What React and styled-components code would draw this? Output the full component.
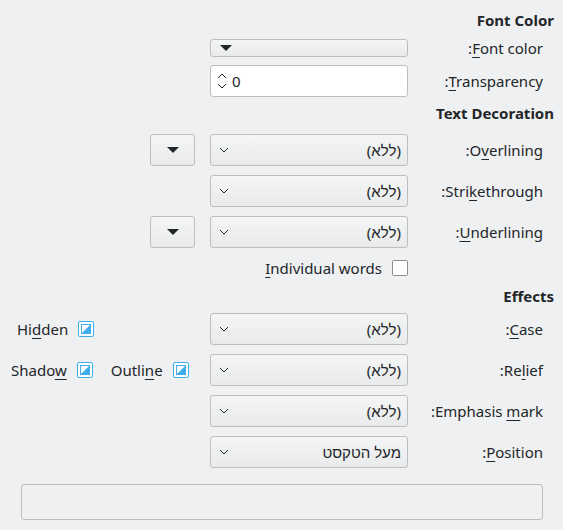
import React from "react";
import styled, { createGlobalStyle } from "styled-components";

const Global = createGlobalStyle`
  body { margin:0; background:#eff0f1; font-family:"Noto Sans",sans-serif; font-size:15px; color:#232629; }
`;
const Page = styled.div`width:563px;height:530px;box-sizing:border-box;padding:9px 20px 0 21px;display:flex;flex-direction:column;`;
const Heading = styled.div`font-weight:bold;text-align:right;margin-right:-11px;height:${p=>p.h||22}px;line-height:${p=>p.h||22}px;`;
const Row = styled.div`display:grid;grid-template-columns:174px 198px 1fr;column-gap:15px;align-items:center;height:${p=>p.h||41}px;`;
const Left = styled.div`display:flex;justify-content:${p=>p.start?"flex-start":"flex-end"};align-items:center;gap:18px;margin-left:${p=>p.ml||0}px;`;
const Label = styled.div`text-align:right;`;
const U = styled.span`text-decoration:underline;text-underline-offset:3px;`;
const Combo = styled.div`height:32px;box-sizing:border-box;border:1px solid #bcbebf;border-radius:3px;background:linear-gradient(#f4f5f5,#e9eaeb);display:flex;align-items:center;justify-content:space-between;padding:0 6px 0 8px;`;
const Spin = styled.div`height:32px;box-sizing:border-box;border:1px solid #bcbebf;border-radius:3px;background:#fff;display:flex;align-items:center;gap:4px;padding:0 5px;`;
const ColorBtn = styled.div`height:18px;box-sizing:border-box;border:1px solid #bcbebf;border-radius:3px;background:linear-gradient(#f4f5f5,#e9eaeb);display:flex;align-items:center;padding-left:9px;`;
const Tri = styled.span`width:0;height:0;border-left:6px solid transparent;border-right:6px solid transparent;border-top:6px solid #232629;`;
const SmallBtn = styled.div`width:45px;height:32px;box-sizing:border-box;border:1px solid #bcbebf;border-radius:3px;background:linear-gradient(#f4f5f5,#e9eaeb);display:flex;align-items:center;justify-content:center;`;
const Check = styled.span`width:16px;height:16px;box-sizing:border-box;border:1px solid ${p=>p.on?"#3daee9":"#8a8d90"};border-radius:2px;background:#fff;display:inline-flex;align-items:center;justify-content:center;`;
const Item = styled.div`display:flex;align-items:center;gap:10px;`;
const Preview = styled.div`margin-top:12px;height:36px;box-sizing:border-box;border:1px solid #bcbebf;border-radius:3px;background:#eff0f1;`;
const Words = styled.div`display:flex;justify-content:flex-end;align-items:center;gap:10px;`;

const Chev = () => <svg width="10" height="6" viewBox="0 0 10 6"><path d="M1 1l4 4 4-4" fill="none" stroke="#232629" strokeWidth="1"/></svg>;
const Tristate = () => <Check on><svg width="10" height="10"><path d="M10 0V10H0Z" fill="#3daee9"/><rect x="0.5" y="0.5" width="9" height="9" fill="none" stroke="#3daee9"/></svg></Check>;
const ComboBox = ({t}) => <Combo><Chev/><span dir="rtl">{t}</span></Combo>;

export default function App(){
  return <><Global/><Page>
    <Heading>Font Color</Heading>
    <Row h={33}><div/><ColorBtn><Tri/></ColorBtn><Label>:<U>F</U>ont color</Label></Row>
    <Row h={34}><div/><Spin>
      <svg width="12" height="20" viewBox="0 0 12 20"><path d="M2 7l4-4 4 4M2 13l4 4 4-4" fill="none" stroke="#232629" strokeWidth="1"/></svg><span>0</span>
    </Spin><Label>:<U>T</U>ransparency</Label></Row>
    <Heading h={31}>Text Decoration</Heading>
    <Row><Left><SmallBtn><Tri/></SmallBtn></Left><ComboBox t="(ללא)"/><Label>:O<U>v</U>erlining</Label></Row>
    <Row><div/><ComboBox t="(ללא)"/><Label>:Stri<U>k</U>ethrough</Label></Row>
    <Row><Left><SmallBtn><Tri/></SmallBtn></Left><ComboBox t="(ללא)"/><Label>:<U>U</U>nderlining</Label></Row>
    <Row h={32}><div/><Words><span><U>I</U>ndividual words</span><Check/></Words><div/></Row>
    <Heading h={24}>Effects</Heading>
    <Row><Left start ml={-4}><Item><span>Hi<U>d</U>den</span><Tristate/></Item></Left><ComboBox t="(ללא)"/><Label>:<U>C</U>ase</Label></Row>
    <Row><Left start ml={-10}><Item><span>Shado<U>w</U></span><Tristate/></Item><Item><span>Outli<U>n</U>e</span><Tristate/></Item></Left><ComboBox t="(ללא)"/><Label>:Re<U>l</U>ief</Label></Row>
    <Row><div/><ComboBox t="(ללא)"/><Label>:Emphasis <U>m</U>ark</Label></Row>
    <Row><div/><ComboBox t="מעל הטקסט"/><Label>:<U>P</U>osition</Label></Row>
    <Preview/>
  </Page></>;
}
